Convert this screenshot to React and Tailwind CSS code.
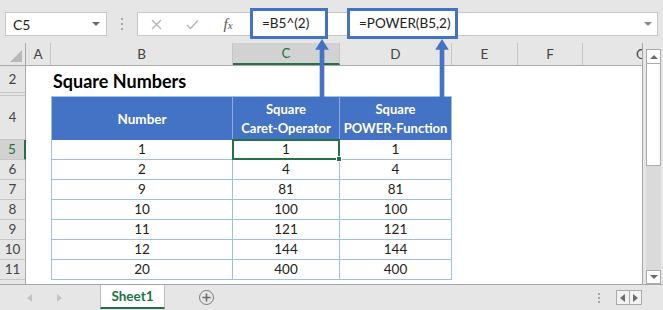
import React from 'react';

// columns of the sheet, widths in px
const COLS = [
  { k: 'A', w: 'w-[25px]' },
  { k: 'B', w: 'w-[182px]' },
  { k: 'C', w: 'w-[107px]' },
  { k: 'D', w: 'w-[112px]' },
  { k: 'E', w: 'w-[66px]' },
  { k: 'F', w: 'w-[65px]' },
  { k: 'G', w: 'w-[117px]' },
];

const DATA = [
  [1, 1, 1],
  [2, 4, 4],
  [9, 81, 81],
  [10, 100, 100],
  [11, 121, 121],
  [12, 144, 144],
  [20, 400, 400],
];

function RowHead({ n, selected }) {
  return (
    <div
      className={`w-[26px] shrink-0 flex items-center justify-center border-b border-[#c6c6c6] ${
        selected
          ? 'bg-[#d2d2d2] text-[#217346] border-r-2 border-r-[#217346]'
          : 'bg-[#e6e6e6] text-[#444] border-r border-r-[#ababab]'
      }`}
    >
      {n}
    </div>
  );
}

function UpArrow({ className }) {
  return (
    <svg className={className} width="14" height="60" viewBox="0 0 14 60">
      <polygon points="0,11 7,0 14,11" fill="#4472c4" />
      <rect x="4.6" y="10" width="4.8" height="50" fill="#4472c4" />
    </svg>
  );
}

export default function App() {
  return (
    <div className="w-[663px] h-[310px] bg-[#e6e6e6] relative overflow-hidden font-[Lato,'Liberation_Sans',sans-serif] text-[13.5px] text-[#222]">
      {/* formula bar */}
      <div className="h-[43px] flex items-start pt-[12px] px-[5px]">
        <div className="w-[102px] h-[24px] bg-white border border-[#c6c6c6] flex items-center justify-between pl-[7px] pr-[6px]">
          <span className="text-[14px]">C5</span>
          <span className="w-0 h-0 border-x-[4px] border-x-transparent border-t-[4px] border-t-[#6b6b6b]" />
        </div>
        <div className="w-[30px] h-[24px] flex flex-col items-center justify-center gap-[3px]">
          <span className="w-[2px] h-[2px] bg-[#a6a6a6]" />
          <span className="w-[2px] h-[2px] bg-[#a6a6a6]" />
          <span className="w-[2px] h-[2px] bg-[#a6a6a6]" />
        </div>
        <div className="flex-1 h-[24px] bg-white border border-[#c6c6c6] flex items-center">
          <div className="w-[36px] flex justify-center">
            <svg width="11" height="11" viewBox="0 0 11 11">
              <path d="M1 1L10 10M10 1L1 10" stroke="#b3b3b3" strokeWidth="1.3" />
            </svg>
          </div>
          <div className="w-[36px] flex justify-center">
            <svg width="13" height="11" viewBox="0 0 13 11">
              <path d="M1 6L4.5 9.5L12 1.5" stroke="#b3b3b3" strokeWidth="1.4" fill="none" />
            </svg>
          </div>
          <div className="w-[36px] flex justify-center">
            <span className="font-['Liberation_Serif',serif] italic text-[15px] text-[#555] leading-none">
              f<span className="text-[11px]">x</span>
            </span>
          </div>
          <div className="flex-1" />
          <span className="mr-[5px] w-0 h-0 border-x-[4px] border-x-transparent border-t-[4px] border-t-[#8a8a8a]" />
        </div>
      </div>

      {/* sheet area */}
      <div className="h-[241px] flex">
        <div className="w-[643px] shrink-0 overflow-hidden flex flex-col bg-white border-r border-[#a6a6a6]">
          {/* column headers */}
          <div className="h-[23px] shrink-0 flex bg-[#e6e6e6] border-b border-[#ababab] text-[#444]">
            <div className="w-[26px] shrink-0 relative border-r border-[#ababab]">
              <span className="absolute right-[3px] bottom-[3px] w-0 h-0 border-l-[12px] border-l-transparent border-b-[12px] border-b-[#b8b8b8]" />
            </div>
            {COLS.map((c) => (
              <div
                key={c.k}
                className={`${c.w} shrink-0 flex items-center justify-center border-r border-[#c6c6c6] ${
                  c.k === 'C' ? 'bg-[#d2d2d2] text-[#217346] border-b-2 border-b-[#217346]' : ''
                }`}
              >
                {c.k}
              </div>
            ))}
          </div>

          {/* row 2 */}
          <div className="h-[27px] shrink-0 flex">
            <RowHead n={2} />
            <div className="w-[25px] shrink-0" />
            <div className="flex-1 flex items-end pb-[3px] pl-[2px] font-bold text-[18px] text-black leading-none">
              Square Numbers
            </div>
          </div>
          {/* hidden row 3 */}
          <div className="h-[3px] shrink-0 flex">
            <div className="w-[26px] shrink-0 bg-[#e6e6e6] border-r border-[#ababab] border-b border-b-[#c6c6c6]" />
          </div>
          {/* row 4: table header */}
          <div className="h-[44px] shrink-0 flex text-[13px]">
            <RowHead n={4} />
            <div className="w-[25px] shrink-0" />
            <div className="w-[182px] shrink-0 bg-[#4472c4] border-l border-t border-[#9bc2e6] border-r border-r-[#8ea9db] text-white font-bold flex items-center justify-center pt-[2px] text-[13.5px]">
              Number
            </div>
            <div className="w-[107px] shrink-0 bg-[#4472c4] border-t border-[#9bc2e6] border-r border-r-[#8ea9db] text-white font-bold flex flex-col items-center justify-center leading-[19px] pt-[1px]">
              <span>Square</span>
              <span>Caret-Operator</span>
            </div>
            <div className="w-[112px] shrink-0 bg-[#4472c4] border-t border-r border-[#9bc2e6] text-white font-bold flex flex-col items-center justify-center leading-[19px] pt-[1px]">
              <span>Square</span>
              <span>POWER-Function</span>
            </div>
          </div>
          {/* rows 5-11 */}
          {DATA.map((r, i) => (
            <div key={i} className="h-[20px] shrink-0 flex">
              <RowHead n={i + 5} selected={i === 0} />
              <div className="w-[25px] shrink-0" />
              <div className="w-[182px] shrink-0 border-l border-r border-b border-[#9bc2e6] flex items-center justify-center">
                {r[0]}
              </div>
              <div className="w-[107px] shrink-0 relative border-r border-b border-[#9bc2e6] flex items-center justify-center">
                {r[1]}
                {i === 0 && (
                  <>
                    <span className="absolute -inset-px border-2 border-[#217346] z-10" />
                    <span className="absolute -right-[3px] -bottom-[3px] w-[6px] h-[6px] bg-[#217346] border border-white z-20" />
                  </>
                )}
              </div>
              <div className="w-[112px] shrink-0 border-r border-b border-[#9bc2e6] flex items-center justify-center">
                {r[2]}
              </div>
            </div>
          ))}
          {/* row 12, cut off */}
          <div className="flex-1 flex">
            <div className="w-[26px] shrink-0 bg-[#e6e6e6] border-r border-[#ababab]" />
          </div>
        </div>

        {/* vertical scrollbar */}
        <div className="w-[20px] shrink-0 flex flex-col pl-[3px] pr-[2px] pt-[6px]">
          <div className="h-[15px] bg-white border border-[#ababab] flex items-center justify-center">
            <span className="w-0 h-0 border-x-[4px] border-x-transparent border-b-[4px] border-b-[#6b6b6b]" />
          </div>
          <div className="h-[102px] bg-white border-x border-b border-[#ababab]" />
          <div className="flex-1 bg-[#dadada]" />
          <div className="h-[14px] bg-white border border-[#ababab] flex items-center justify-center">
            <span className="w-0 h-0 border-x-[4px] border-x-transparent border-t-[4px] border-t-[#6b6b6b]" />
          </div>
        </div>
      </div>

      {/* sheet tabs */}
      <div className="h-[26px] flex items-center border-t border-[#a6a6a6]">
        <div className="w-[100px] shrink-0 flex items-center">
          <span className="ml-[27px] w-0 h-0 border-y-[4px] border-y-transparent border-r-[5px] border-r-[#c3c3c3]" />
          <span className="ml-[25px] w-0 h-0 border-y-[4px] border-y-transparent border-l-[5px] border-l-[#c3c3c3]" />
        </div>
        <div className="self-start w-[65px] h-[24px] shrink-0 bg-white border-x border-[#bdbdbd] border-b-2 border-b-[#217346] flex items-center justify-center font-bold text-[#217346]">
          Sheet1
        </div>
        <div className="ml-[34px] w-[15px] h-[15px] rounded-full border-[1.5px] border-[#7b7b7b] flex items-center justify-center">
          <svg width="9" height="9" viewBox="0 0 9 9">
            <path d="M4.5 0.5V8.5M0.5 4.5H8.5" stroke="#6b6b6b" strokeWidth="1.6" />
          </svg>
        </div>
        <div className="ml-auto flex flex-col gap-[2px] mr-[16px]">
          <span className="w-[2px] h-[2px] bg-[#a6a6a6]" />
          <span className="w-[2px] h-[2px] bg-[#a6a6a6]" />
          <span className="w-[2px] h-[2px] bg-[#a6a6a6]" />
        </div>
        <div className="w-[26px] h-[15px] flex border border-[#ababab] bg-[#f2f2f2] mr-[21px]">
          <div className="flex-1 flex items-center justify-center border-r border-[#ababab]">
            <span className="w-0 h-0 border-y-[4px] border-y-transparent border-r-[5px] border-r-[#6b6b6b]" />
          </div>
          <div className="flex-1 flex items-center justify-center">
            <span className="w-0 h-0 border-y-[4px] border-y-transparent border-l-[5px] border-l-[#6b6b6b]" />
          </div>
        </div>
      </div>

      {/* annotations: formula callouts with arrows */}
      <div className="absolute left-[250px] top-[8px] w-[78px] h-[31px] bg-white border-[3px] border-[#4472c4] flex items-center pl-[9px] text-[13.5px]">
        =B5^(2)
      </div>
      <div className="absolute left-[347px] top-[8px] w-[111px] h-[31px] bg-white border-[3px] border-[#4472c4] flex items-center pl-[9px] text-[13.5px]">
        =POWER(B5,2)
      </div>
      <UpArrow className="absolute left-[315px] top-[39px] h-[58px]" />
      <UpArrow className="absolute left-[435px] top-[39px] h-[58px]" />
    </div>
  );
}
